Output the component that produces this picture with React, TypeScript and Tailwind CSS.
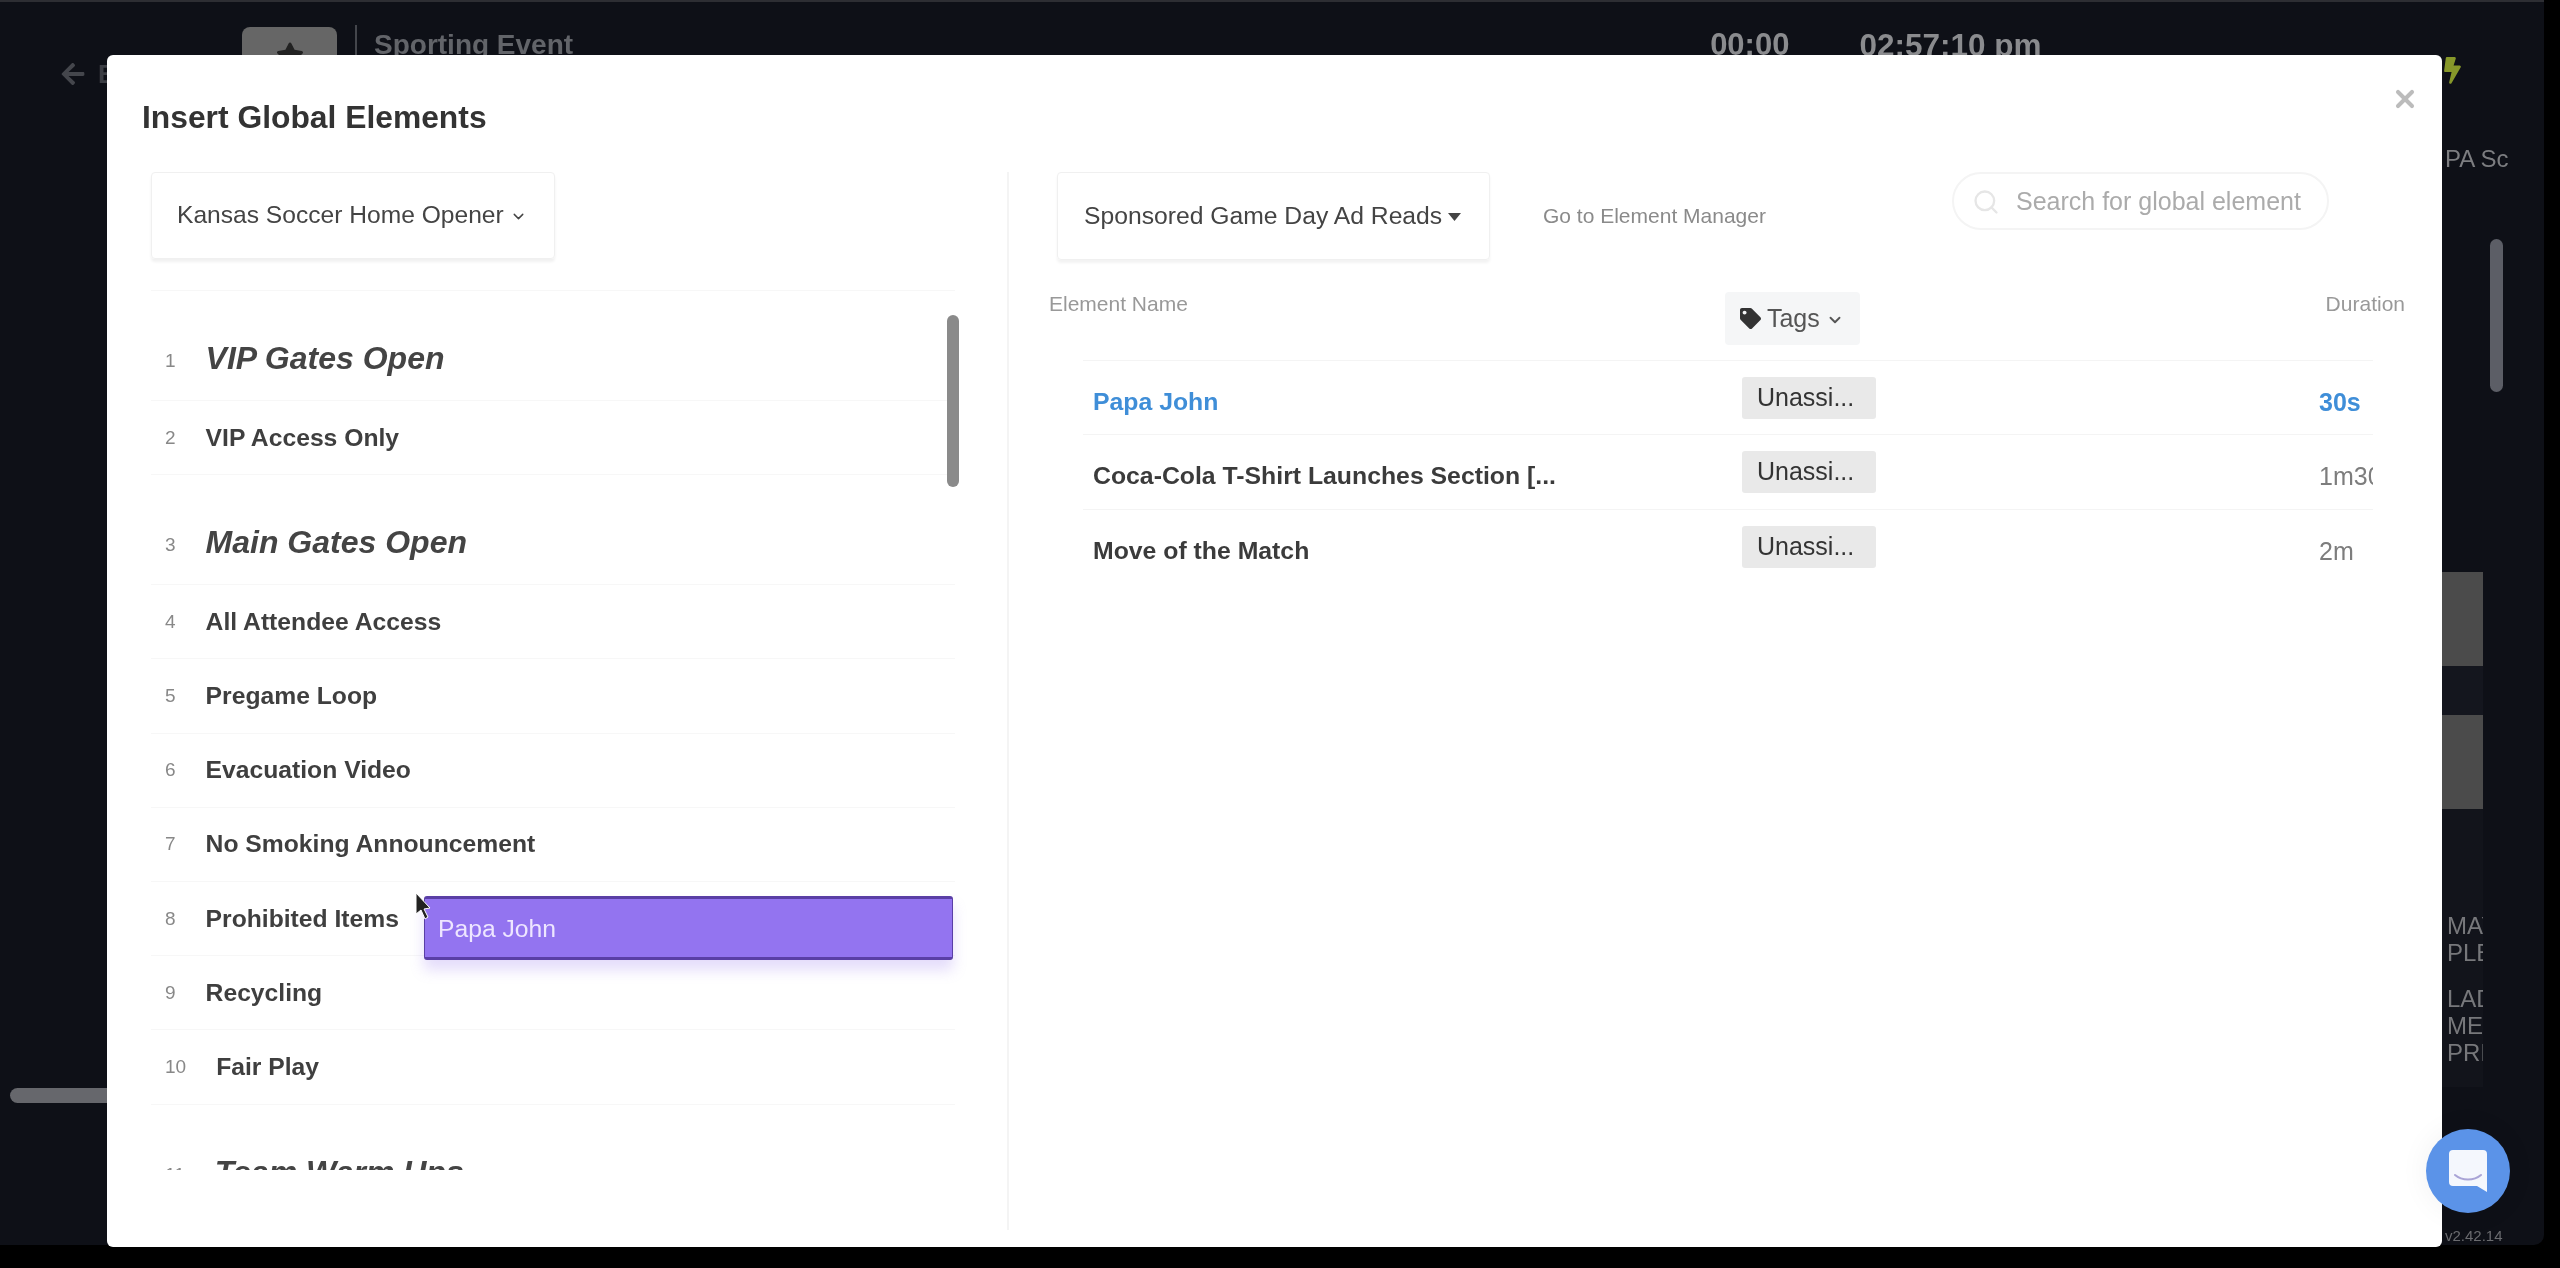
import { ChevronDown, Search, X } from "lucide-react";
import { FaArrowLeft, FaBolt, FaStar, FaTag } from "react-icons/fa";

type Row = { n: number; label: string; head?: boolean };

const rows: Row[] = [
  { n: 1, label: "VIP Gates Open", head: true },
  { n: 2, label: "VIP Access Only" },
  { n: 3, label: "Main Gates Open", head: true },
  { n: 4, label: "All Attendee Access" },
  { n: 5, label: "Pregame Loop" },
  { n: 6, label: "Evacuation Video" },
  { n: 7, label: "No Smoking Announcement" },
  { n: 8, label: "Prohibited Items" },
  { n: 9, label: "Recycling" },
  { n: 10, label: "Fair Play" },
  { n: 11, label: "Team Warm Ups", head: true },
];

const elements = [
  { name: "Papa John", dur: "30s", active: true },
  { name: "Coca-Cola T-Shirt Launches Section [...", dur: "1m30s", active: false },
  { name: "Move of the Match", dur: "2m", active: false },
];

function ListRow({ row }: { row: Row }) {
  if (row.head) {
    return (
      <div className="flex h-[110px] shrink-0 items-end gap-[30px] border-b border-[#f7f7f7] pb-[24px] pl-[14px]">
        <span className="mb-[3px] text-[19px] leading-[24px] text-[#888]">{row.n}</span>
        <span className="text-[32px] leading-[36px] font-bold italic text-[#444]">{row.label}</span>
      </div>
    );
  }
  return (
    <div className="flex h-[74.2px] shrink-0 items-center gap-[30px] border-b border-[#f7f7f7] pl-[14px]">
      <span className="text-[19px] leading-[24px] text-[#888]">{row.n}</span>
      <span className="text-[24.7px] leading-[30px] font-bold text-[#3f3f3f]">{row.label}</span>
    </div>
  );
}

function Backdrop() {
  return (
    <div className="flex h-[1245px] w-[2544px] flex-col rounded-br-[10px] border-t-2 border-[#2d2e33] bg-[#0e1017]">
      <div className="flex h-[53px] shrink-0 items-end overflow-hidden">
        <div className="ml-[242px] flex h-[28px] w-[95px] items-start justify-center rounded-t-[8px] bg-[#666]">
          <FaStar className="mt-[14px] text-[28px] text-[#222]" />
        </div>
        <div className="ml-[18px] h-[30px] w-[2px] bg-[#44464c]" />
        <span className="mb-[-8px] ml-[17px] text-[28px] leading-[36px] font-bold text-[#626469]">Sporting Event</span>
        <span className="mb-[-8px] ml-[1137px] text-[31px] leading-[36px] font-bold text-[#8a8b8e]">00:00</span>
        <span className="mb-[-8px] ml-[70px] text-[31.5px] leading-[36px] font-bold text-[#8a8b8e]">02:57:10 pm</span>
      </div>
      <div className="flex min-h-0 flex-1">
        <div className="flex w-[107px] shrink-0 flex-col pl-[10px]">
          <div className="mt-[3px] flex h-[32px] items-center gap-[12px] overflow-hidden pl-[50px]">
            <FaArrowLeft className="shrink-0 text-[26px] text-[#44464c]" />
            <span className="text-[26px] font-bold text-[#3c3e44]">Back</span>
          </div>
          <div className="mt-[998px] h-[15px] w-[97px] rounded-l-full bg-[#66676c]" />
        </div>
        <div className="ml-auto flex w-[102px] shrink-0 flex-col">
          <FaBolt className="mt-[2px] -ml-[3px] text-[27px] text-[#87982a]" />
          <span className="mt-[61px] ml-[3px] text-[24px] leading-[28px] whitespace-nowrap text-[#7c7d80]">PA Sc</span>
          <div className="mt-[66px] ml-[48px] h-[154px] w-[13px] rounded-full bg-[#5c5e66]" />
          <div className="mt-[180px] h-[94px] w-[41px] bg-[#4b4b4b]" />
          <div className="h-[50px] w-[41px] bg-[#14161e]" />
          <div className="h-[94px] w-[41px] bg-[#4b4b4b]" />
          <div className="flex h-[279px] w-[41px] flex-col overflow-hidden bg-[#12141b] pt-[103px] pl-[5px] text-[24px] leading-[27px] text-[#77787b]">
            <span>MAY</span>
            <span>PLE</span>
            <span className="mt-[19px]">LAD</span>
            <span>MEI</span>
            <span>PRI</span>
          </div>
          <span className="mt-[140px] ml-[3px] text-[15px] leading-[18px] text-[#6a6b6f]">v2.42.14</span>
        </div>
      </div>
    </div>
  );
}

export default function App() {
  return (
    <div className="relative h-[1268px] w-[2560px] overflow-hidden bg-black font-['Liberation_Sans',Arial,sans-serif] blur-[0.6px]">
      <Backdrop />

      <div className="absolute top-[55px] left-[107px] flex h-[1192px] w-[2335px] flex-col rounded-[6px] bg-white">
        <div className="relative h-[117px] shrink-0 pt-[44px] pl-[35px]">
          <h1 className="text-[31.8px] leading-[36px] font-bold text-[#333]">Insert Global Elements</h1>
          <X className="absolute top-[30px] right-[23px] text-[#bcbcbc]" size={28} strokeWidth={3.5} />
        </div>

        <div className="flex min-h-0 flex-1 pb-[17px]">
          <div className="relative w-[902px] shrink-0 border-r-2 border-[#f4f4f4] pl-[44px]">
            <button className="flex h-[87px] w-[404px] items-center gap-[6px] rounded-[4px] border border-[#f0f0f0] pl-[25px] text-[24.6px] text-[#444] shadow-[0_3px_3px_rgba(0,0,0,0.06)]">
              <span>Kansas Soccer Home Opener</span>
              <ChevronDown size={17} strokeWidth={2} className="mt-[2px]" />
            </button>
            <div className="mt-[31px] flex h-[880px] w-[804px] flex-col overflow-hidden border-t border-[#f7f7f7]">
              {rows.map((row) => (
                <ListRow key={row.n} row={row} />
              ))}
            </div>
            <div className="absolute top-[143px] left-[840px] h-[172px] w-[12px] rounded-full bg-[#8a8a8a]" />
            <div className="absolute top-[724px] left-[317px] flex h-[64px] w-[529px] items-center rounded-[3px] border-x border-y-[3px] border-[#5a3fa6] bg-[#9374f0] pl-[13px] text-[24.7px] text-[#eee6ff] shadow-[0_10px_14px_rgba(147,116,240,0.25)]">
              <span className="mt-[2px]">Papa John</span>
            </div>
            <svg className="absolute top-[720px] left-[307px]" width="20" height="30" viewBox="0 0 20 30">
              <path d="M2 1 L2 22 L7 18 L11 27 L14 25 L10 17 L16 16 Z" fill="#222" stroke="#fff" strokeWidth="1" />
            </svg>
          </div>

          <div className="min-w-0 flex-1 pl-[48px]">
            <div className="flex items-start">
              <button className="flex h-[88px] w-[433px] shrink-0 items-center gap-[6px] rounded-[4px] border border-[#f0f0f0] pl-[26px] text-[24.7px] text-[#444] shadow-[0_3px_3px_rgba(0,0,0,0.05)]">
                <span>Sponsored Game Day Ad Reads</span>
                <svg width="13" height="8" viewBox="0 0 13 8" className="mt-[2px]"><path d="M0 0H13L6.5 8Z" fill="#444" /></svg>
              </button>
              <a className="mt-[30px] ml-[53px] text-[21px] leading-[28px] text-[#8a8a8a]">Go to Element Manager</a>
              <div className="mr-[113px] ml-auto flex h-[58px] w-[377px] items-center gap-[16px] rounded-full border-2 border-[#f4f4f4] pt-[1px] pl-[18px]">
                <Search size={28} strokeWidth={2} className="text-[#e6e6e6]" />
                <span className="text-[25px] text-[#ababab]">Search for global element</span>
              </div>
            </div>

            <div className="mt-[32px] flex h-[68px] items-start">
              <span className="-ml-[8px] text-[21px] leading-[24px] text-[#999]">Element Name</span>
              <div className="ml-[537px] flex h-[53px] w-[135px] items-center gap-[6px] rounded-[4px] bg-[#f5f6f7] pl-[15px] text-[25px] text-[#555]">
                <FaTag className="text-[21px] text-[#333]" />
                <span>Tags</span>
                <ChevronDown size={18} strokeWidth={2.5} className="mt-[2px]" />
              </div>
              <span className="mr-[37px] ml-auto text-[21px] leading-[24px] text-[#999]">Duration</span>
            </div>

            <div className="ml-[26px] w-[1290px] border-t border-[#f4f4f4]">
              {elements.map((el, i) => (
                <div key={el.name} className={`grid h-[74.3px] grid-cols-[659px_577px_54px] items-center ${i < 2 ? "border-b border-[#f4f4f4]" : ""}`}>
                  <span className={`mt-[9px] pl-[10px] text-[24.8px] leading-[30px] font-bold ${el.active ? "text-[#3f8ed8]" : "text-[#3b3b3b]"}`}>{el.name}</span>
                  <span className="flex h-[42px] w-[134px] items-center rounded-[3px] bg-[#e9e9e9] pl-[15px] text-[25px] text-[#333]">Unassi...</span>
                  <span className={`mt-[9px] overflow-hidden text-[25px] leading-[30px] whitespace-nowrap ${el.active ? "font-bold text-[#3f8ed8]" : "text-[#7d7d7d]"}`}>{el.dur}</span>
                </div>
              ))}
            </div>
          </div>
        </div>
      </div>

      <div className="absolute top-[1129px] left-[2426px] flex h-[84px] w-[84px] items-center justify-center rounded-full bg-[#5b93e8] shadow-[0_0_30px_rgba(0,0,0,0.06)]">
        <svg width="40" height="44" viewBox="0 0 40 44">
          <path d="M5 1H35A4 4 0 0 1 39 5V43L29 37H5A4 4 0 0 1 1 33V5A4 4 0 0 1 5 1Z" fill="#f4f7fd" />
          <path d="M7 26C14 32 26 32 33 26" fill="none" stroke="#a9a4d6" strokeWidth="2" strokeLinecap="round" />
        </svg>
      </div>
    </div>
  );
}
